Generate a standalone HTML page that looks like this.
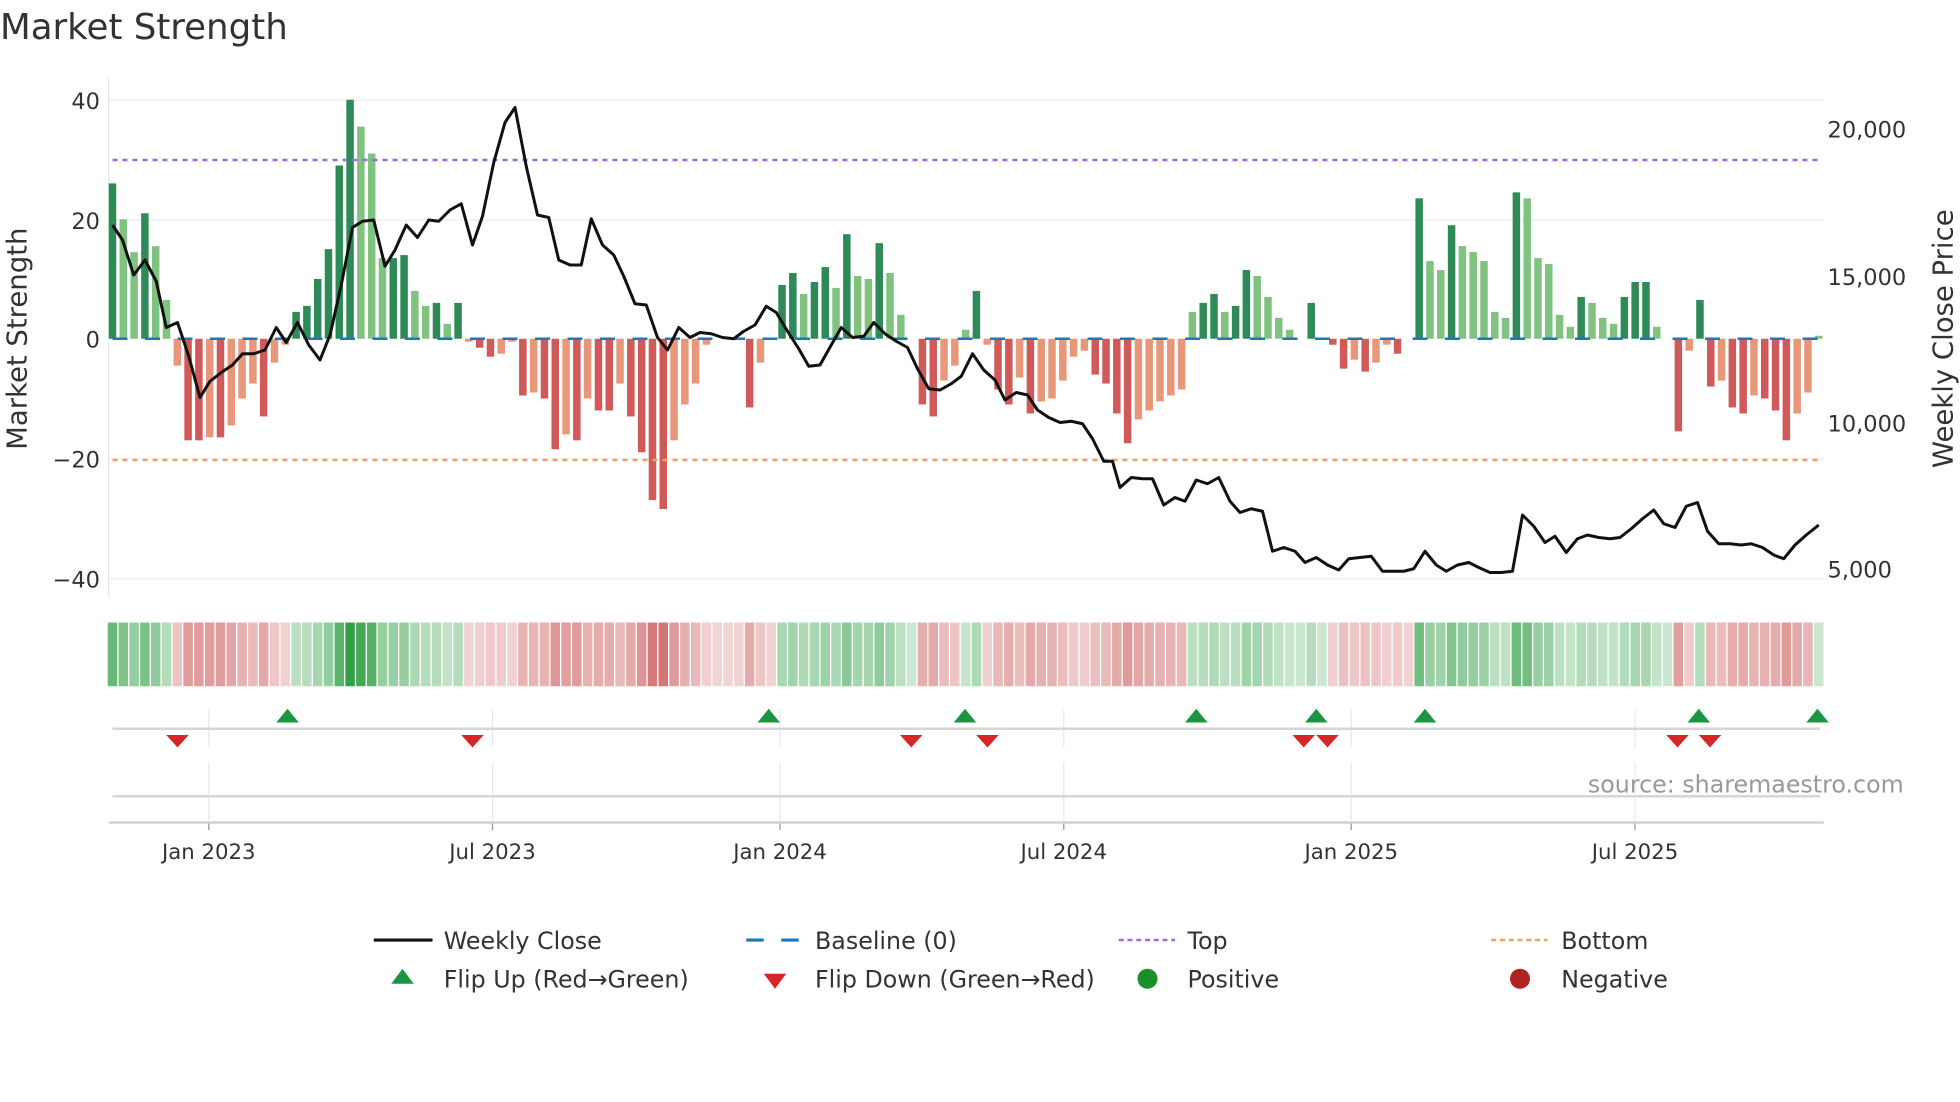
<!DOCTYPE html>
<html><head><meta charset="utf-8"><style>
html,body{margin:0;padding:0;background:#fff;width:1960px;height:1102px;overflow:hidden}
svg{display:block}
text{font-family:"DejaVu Sans","Liberation Sans",sans-serif;fill:#333}
</style></head><body>
<svg id="s" width="1960" height="1102" viewBox="0 0 1568 881.6" xmlns="http://www.w3.org/2000/svg">
<text x="0" y="31" font-size="28.5">Market Strength</text>
<g stroke="#ececf2" stroke-width="1">
<line x1="87" y1="80" x2="1459" y2="80"/><line x1="87" y1="176" x2="1459" y2="176"/>
<line x1="87" y1="367" x2="1459" y2="367"/><line x1="87" y1="463" x2="1459" y2="463"/>
</g>
<line x1="87" y1="62" x2="87" y2="478" stroke="#e6e6ea"/>
<g font-size="18" text-anchor="end">
<text x="80" y="87">40</text><text x="80" y="183">20</text><text x="80" y="278">0</text>
<text x="80" y="374">−20</text><text x="80" y="470">−40</text></g>
<g font-size="18">
<text x="1462" y="110">20,000</text><text x="1462" y="228">15,000</text>
<text x="1462" y="345">10,000</text><text x="1462" y="462">5,000</text></g>
<text transform="translate(21,271) rotate(-90)" font-size="22" text-anchor="middle">Market Strength</text>
<text transform="translate(1562,271) rotate(-90)" font-size="22" text-anchor="middle">Weekly Close Price</text>
<g id="bars"></g>
<line x1="90" y1="271" x2="1459" y2="271" stroke="#1f77b4" stroke-width="2" stroke-dasharray="12,14"/>
<line x1="90" y1="128" x2="1456" y2="128" stroke="#9b6ddc" stroke-width="2" stroke-dasharray="4,4"/>
<line x1="90" y1="368" x2="1456" y2="368" stroke="#f0a060" stroke-width="2" stroke-dasharray="4,4"/>
<polyline id="price" fill="none" stroke="#111" stroke-width="2.4" stroke-linejoin="round"/>
<g id="strip"></g>
<g stroke="#e8e8ec"><g id="vg"></g></g>
<line x1="90" y1="583" x2="1456" y2="583" stroke="#d6d6d6" stroke-width="2"/>
<line x1="90" y1="637" x2="1456" y2="637" stroke="#d6d6d6" stroke-width="2"/>
<line x1="87" y1="658" x2="1459" y2="658" stroke="#d0d0d0" stroke-width="2"/>
<g id="mk"></g>
<g font-size="17" text-anchor="middle" id="tl"></g>
<text x="1523" y="634" font-size="19" text-anchor="end" style="fill:#999">source: sharemaestro.com</text>
<g font-size="19">
<line x1="299" y1="752" x2="346" y2="752" stroke="#111" stroke-width="2.5"/><text x="355" y="759">Weekly Close</text>
<line x1="597" y1="752" x2="642" y2="752" stroke="#1f77b4" stroke-width="2.5" stroke-dasharray="14,14"/><text x="652" y="759">Baseline (0)</text>
<line x1="895" y1="752" x2="940" y2="752" stroke="#9b6ddc" stroke-width="2" stroke-dasharray="4,3"/><text x="950" y="759">Top</text>
<line x1="1193" y1="752" x2="1238" y2="752" stroke="#f0a060" stroke-width="2" stroke-dasharray="4,3"/><text x="1249" y="759">Bottom</text>
<polygon points="313,787 331,787 322,775" fill="#1a9641"/><text x="355" y="790">Flip Up (Red→Green)</text>
<polygon points="611,779 629,779 620,791" fill="#d62728"/><text x="652" y="790">Flip Down (Green→Red)</text>
<circle cx="918" cy="783" r="8" fill="#1a8f2a"/><text x="950" y="790">Positive</text>
<circle cx="1216" cy="783" r="8" fill="#b22222"/><text x="1249" y="790">Negative</text>
</g>
</svg>
<script>
var NS="http://www.w3.org/2000/svg";
function el(t,a,p){var e=document.createElementNS(NS,t);for(var k in a)e.setAttribute(k,a[k]);document.getElementById(p).appendChild(e);return e;}
var v=[26,20,14.5,21,15.5,6.5,-4.5,-17,-17,-16.5,-16.5,-14.5,-10,-7.5,-13,-4,-1,4.5,5.5,10,15,29,40,35.5,31,13.5,13.5,14,8,5.5,6,2.5,6,-0.5,-1.5,-3,-2.5,-0.5,-9.5,-9,-10,-18.5,-16,-17,-10,-12,-12,-7.5,-13,-19,-27,-28.5,-17,-11,-7.5,-1,0,0,0,-11.5,-4,0,9,11,7.5,9.5,12,8.5,17.5,10.5,10,16,11,4,0,-11,-13,-7,-4.5,1.5,8,-1,-8.5,-11,-6.5,-12.5,-10.5,-10,-7,-3,-2,-6,-7.5,-12.5,-17.5,-13.5,-12,-10.5,-9.5,-8.5,4.5,6,7.5,4.5,5.5,11.5,10.5,7,3.5,1.5,0,6,0,-1,-5,-3.5,-5.5,-4,-1,-2.5,0,23.5,13,11.5,19,15.5,14.5,13,4.5,3.5,24.5,23.5,13.5,12.5,4,2,7,6,3.5,2.5,7,9.5,9.5,2,0,-15.5,-2,6.5,-8,-7,-11.5,-12.5,-9.5,-10,-12,-17,-12.5,-9,0.5];
var n=v.length,sp=(1455-90)/(n-1),prev=1;
for(var i=0;i<n;i++){var x=90+i*sp,y0=271,h=v[i]*4.78,val=v[i];
 var dark=(i==0)||Math.abs(val)>=Math.abs(v[i-1]);
 var c=val>=0?(dark?"#2e8b57":"#80c27f"):(dark?"#d05a5a":"#e8977a");
 if(val!=0)el("rect",{x:x-3,y:val>0?y0-h:y0,width:6,height:Math.abs(h),fill:c},"bars");
 var s=val>0?1:(val<0?-1:prev);prev=s;var a=0.25+Math.min(Math.abs(val),40)/40*0.75;
 el("rect",{x:x-3.8,y:498,width:7.6,height:51,fill:s>0?"rgb(50,160,70)":"rgb(200,80,80)","fill-opacity":a},"strip");}
var p="90,180 98,192 107,220 116,208 125,225 133,262 142,258 151,285 160,318 168,305 177,298 186,292 194,283 203,283 212,280 221,262 229,274 238,258 247,276 256,288 264,268 273,228 282,182 290,177 299,176 308,213 316,200 325,180 334,190 343,176 351,177 360,168 369,163 378,196 386,173 395,130 404,98 412,86 421,133 430,172 439,174 447,208 456,212 465,212 473,175 482,196 491,204 499,221 508,243 517,244 526,270 534,280 543,262 552,270 560,266 569,267 578,270 587,271 595,265 604,260 613,245 621,250 630,265 639,279 647,293 656,292 665,276 673,262 682,270 691,269 699,258 708,267 717,273 726,278 734,295 743,311 752,312 761,307 769,301 778,283 787,296 796,304 804,320 813,314 822,316 830,328 839,334 848,338 857,337 866,339 874,351 883,369 890,369 896,390 905,382 914,383 922,383 931,404 940,398 948,401 957,384 966,387 975,382 984,401 992,410 1001,407 1010,409 1018,441 1027,438 1036,441 1044,450 1053,446 1062,452 1071,456 1079,447 1088,446 1097,445 1106,457 1114,457 1123,457 1131,455 1140,441 1149,452 1157,457 1166,452 1175,450 1183,454 1192,458 1201,458 1210,457 1218,412 1227,421 1236,434 1244,429 1253,442 1262,431 1270,428 1279,430 1288,431 1296,430 1305,423 1314,415 1323,408 1331,419 1340,422 1349,405 1358,402 1366,425 1375,435 1384,435 1393,436 1401,435 1410,438 1419,444 1427,447 1436,436 1445,428 1455,420";
document.getElementById("price").setAttribute("points",p);
var ms=[[167,"Jan 2023"],[394,"Jul 2023"],[624,"Jan 2024"],[851,"Jul 2024"],[1081,"Jan 2025"],[1308,"Jul 2025"]];
ms.forEach(function(m){el("line",{x1:m[0],y1:568,x2:m[0],y2:598},"vg");el("line",{x1:m[0],y1:610,x2:m[0],y2:656},"vg");
 el("line",{x1:m[0],y1:658,x2:m[0],y2:664,stroke:"#999"},"vg");var t=el("text",{x:m[0],y:687},"tl");t.textContent=m[1];});
[230,615,772,957,1053,1140,1359,1454].forEach(function(x){el("polygon",{points:(x-9)+",578 "+(x+9)+",578 "+x+",567",fill:"#1a9641"},"mk");});
[142,378,729,790,1043,1062,1342,1368].forEach(function(x){el("polygon",{points:(x-9)+",588 "+(x+9)+",588 "+x+",598",fill:"#d62728"},"mk");});
</script>
</body></html>
